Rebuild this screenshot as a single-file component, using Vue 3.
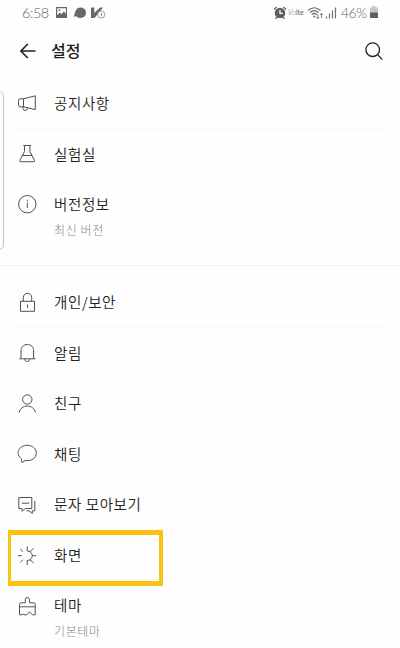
<template>
  <div class="screen">
    <div class="status-bar">
      <span class="clock">6:58</span>
      <svg class="status-left" width="52" height="14" viewBox="0 0 52 14">
        <path fill="#686868" fill-rule="evenodd" d="M1 1h11v11H1zM2.2 2.2v7l2.6-2.7 1.8 1.7 2.3-3 2 2.8V2.2zM3.5 3.5h1.7v1.6H3.5z" />
        <path fill="#686868" d="M18.300 10.300c1.500-.7 1-2.500 1.900-4.600 1-2.700 2.800-4.200 5.300-4.200 3.300 0 5.500 2.300 5.500 5.300s-2.200 5.200-5.500 5.200c-2 0-3.500-.5-4.300-1.900-.9.600-1.800.7-2.900.2z" />
        <path fill="#686868" d="M36 1.500h3.300v5.500L45 1.500h3L39.500 12H36z" />
        <circle cx="46.200" cy="8.500" r="3.600" fill="#fff" stroke="#888" stroke-width=".8" />
        <path d="M45.500 7.200h1v3.300" fill="none" stroke="#777" stroke-width=".8" />
      </svg>
      <svg class="alarm" width="14" height="14" viewBox="0 0 14 14">
        <path d="M1 3.500 3.500 1M10.500 1 13 3.500M2.500 12.800l1.500-2M11.500 12.800l-1.500-2" stroke="#666" stroke-width="1.300" />
        <circle cx="7" cy="7" r="5.300" fill="#606060" />
        <path d="M7 4v3.300h2.700" fill="none" stroke="#fff" stroke-width="1.200" />
      </svg>
      <span class="volte"><i>V</i>o<b>lte</b></span>
      <svg class="signals" width="34" height="14" viewBox="0 0 34 14">
        <g fill="none" stroke="#666" stroke-width="1.100">
          <path d="M1 4.500q6-5.500 12.500 0M3 6.500q4.200-3.700 8.500 0M4.800 8.500q2.500-2.200 5 0" />
          <path d="M10.800 8v4.500M9.300 11l1.500 1.500 1.500-1.500M14.500 12V7.500M13 9l1.500-1.500L16 9" stroke-width=".8" />
        </g>
        <path d="M6.200 9.700h2.100v1.600H6.200z" fill="#666" />
        <path d="M19.500 12.500v-2M22.500 12.500v-5M25.500 12.500v-8M28.500 12.500V1.500" stroke="#707070" stroke-width="1.200" />
      </svg>
      <span class="percent">46%</span>
      <svg class="battery" width="8" height="13" viewBox="0 0 8 13">
        <path d="M2.500 0h3v1.500H8V7H0V1.500h2.500z" fill="#c6c6c6" />
        <path d="M0 6.500h8V12H0z" fill="#606060" />
      </svg>
    </div>

    <header class="header">
      <svg class="back" width="16" height="16" viewBox="0 0 16 16">
        <path d="M15.500 8H1M7.800 1 .900 8l6.900 7" />
      </svg>
      <h1>설정</h1>
      <svg class="search" width="18" height="19" viewBox="0 0 18 19">
        <circle cx="7.700" cy="7.700" r="6.800" />
        <path d="m12.600 12.600 4.700 5" />
      </svg>
    </header>

    <main>
      <section v-for="(group, index) in groups" :key="index" class="group">
        <div v-for="item in group" :key="item.title" class="row" :class="{ tall: item.sub }">
          <svg class="icon" width="20" height="20" viewBox="0 0 20 20">
            <path v-for="d in item.paths" :key="d" :d="d" />
          </svg>
          <div class="text">
            <div class="title">{{ item.title }}</div>
            <div v-if="item.sub" class="sub">{{ item.sub }}</div>
          </div>
          <div v-if="item.marked" class="marker"></div>
        </div>
      </section>
    </main>

    <div class="edge-handle"></div>
  </div>
</template>

<script setup>
const groups = [
  [
    {
      title: "공지사항",
      paths: ["M6.500 5.800 18.300 2.800v13.800L6.500 13.800z", "M6.500 5.800H3q-1.500 0-1.500 1.500v5q0 1.500 1.500 1.500h3.500z", "M6 13.800v1.500a2.200 2.200 0 0 0 4.400 0v-.5"],
    },
    {
      title: "실험실",
      paths: ["M6.300 2.500h7.800M7.500 2.500v6L2.900 17.300q-.6 1.400.8 1.400h13q1.400 0 .8-1.400L12.900 8.500v-6", "M5.400 12.500h9.600"],
    },
    {
      title: "버전정보",
      sub: "최신 버전",
      paths: ["M10.300 1.500a8.700 8.700 0 1 0 0 17.400 8.700 8.700 0 0 0 0-17.400z", "M10.300 8.500v5.500M10.300 5.800v1.200"],
    },
  ],
  [
    {
      title: "개인/보안",
      paths: ["M3.500 9.300h14v10h-14z", "M6.300 9.300V5.500a4.200 4.200 0 0 1 8.400 0v3.800", "M10.500 12.500v3.500"],
    },
    {
      title: "알림",
      paths: ["M2.300 16.800h16M4 16.800V9c0-4 2.500-6.500 6.300-6.500s6.300 2.500 6.300 6.500v7.800", "M7.800 16.800c0 3.500 5 3.500 5 0"],
    },
    {
      title: "친구",
      paths: ["M10.300 1.800a4.700 4.700 0 1 0 0 9.400 4.700 4.700 0 0 0 0-9.400z", "M2.300 19.500c1-8.500 15-8.500 16 0"],
    },
    {
      title: "채팅",
      paths: ["M4.500 15.900C-2 11 1.500 2.300 10.300 2.300c5.200 0 9 3.400 9 7.700 0 5.400-5.300 8.500-11.300 7.500L5 19.700z"],
    },
    {
      title: "문자 모아보기",
      paths: ["M1.800 3.500h13v11H8.300l-3.300 2.800v-2.800H1.800z", "M4.800 9.200h7.400", "M17.800 7v9.800h-2.500v2.700l-3.300-2.700H9.500"],
    },
    {
      title: "화면",
      marked: true,
      paths: [
        "M10.200 2.500v4.400l2.700.8 1.700 1.600.8 2.400-.8 2.500-1.700 1.600-2.700.8v4.400",
        "M12.900 7.700l3.600-3.200M15.400 11.700h3.800M12.900 15.800l3.600 3",
        "M1 11.700h3.700M3.300 5 6 7.700M3.300 18.400 6 15.700",
      ],
    },
    {
      title: "테마",
      sub: "기본테마",
      paths: ["M2.500 19.800V9.300q0-1.500 1.500-1.500h4.300V4.700q0-2.200 2.100-2.200t2.100 2.200v3.100h4.200q1.500 0 1.500 1.500v10.500h-2.700l-3-3-2.800 3H7l-1-1-.8 1z", "M2.500 11.800h15.700"],
    },
  ],
];
</script>

<style>
body {
  background: #fefefe;
}
</style>

<style scoped>
.screen {
  position: relative;
  height: 648px;
  overflow: hidden;
  background: #fefefe;
  color: #202020;
  font-family: "Noto Sans CJK KR", sans-serif;
}

.status-bar {
  display: flex;
  align-items: center;
  height: 25px;
  padding: 0 22px;
  color: #666;
  font-family: Lato, sans-serif;
  font-weight: 300;
  font-size: 14px;
  line-height: 25px;
}

.status-bar svg {
  flex-shrink: 0;
}

.clock {
  width: 33px;
  font-size: 14.5px;
  letter-spacing: -0.5px;
}

.alarm {
  margin-left: auto;
}

.volte {
  width: 16px;
  margin: 0 3px 0 1px;
  font-size: 7px;
  letter-spacing: -0.1px;
  white-space: nowrap;
}

.percent {
  width: 29px;
  letter-spacing: -0.5px;
}

.header {
  display: flex;
  align-items: center;
  height: 52px;
  padding: 0 17px 0 20px;
}

.header svg {
  fill: none;
  stroke: #222;
  stroke-width: 1.3;
}

.header .back {
  stroke-width: 1.7;
}

h1 {
  flex: 1;
  margin: -3px 0 0 15px;
  font-size: 16px;
  font-weight: 500;
}

main {
  padding-top: 1px;
}

.group + .group {
  border-top: 1px solid #f3f3f3;
  padding-top: 11px;
}

.row {
  position: relative;
  display: flex;
  height: 50.5px;
  padding-left: 17px;
}

.row.tall {
  height: 86px;
}

.row:not(:last-child)::after {
  content: "";
  position: absolute;
  right: 16px;
  bottom: 0;
  left: 16px;
  height: 1px;
  background: #f8f8f8;
}

.icon {
  flex-shrink: 0;
  margin: 14.5px 17px 0 0;
  overflow: visible;
  fill: none;
  stroke: #505050;
  stroke-width: 1;
  stroke-linejoin: round;
}

.text {
  padding-top: 13px;
}

.title {
  font-size: 14.5px;
  font-weight: 350;
  letter-spacing: 0.6px;
  line-height: 24px;
}

.sub {
  margin-top: 5px;
  color: #888;
  font-size: 12px;
  font-weight: 300;
  letter-spacing: 0.6px;
  line-height: 18px;
}

.marker {
  position: absolute;
  z-index: 1;
  top: 0;
  left: 8px;
  width: 155px;
  height: 56px;
  box-sizing: border-box;
  border: 5px solid #f9c213;
  border-right-width: 4px;
  border-left-width: 3px;
}

/* side panel handle peeking in from the left edge */
.edge-handle {
  position: absolute;
  top: 91px;
  left: -8px;
  width: 12px;
  height: 159px;
  box-sizing: border-box;
  border: 1px solid #c4c4c4;
  border-radius: 5px;
}
</style>
